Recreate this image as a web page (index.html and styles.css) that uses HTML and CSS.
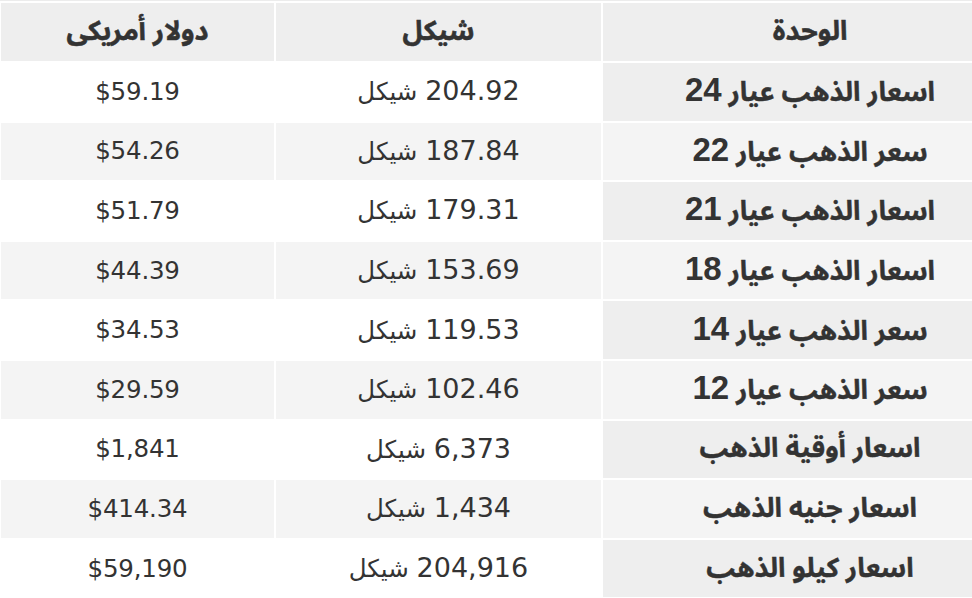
FILE: index.html
```html
<!DOCTYPE html>
<html lang="ar" dir="rtl">
<head>
<meta charset="utf-8">
<title>أسعار الذهب</title>
<link rel="stylesheet" href="styles.css">
</head>
<body>
<div class="topline"></div>
<table class="gold">
  <colgroup>
    <col class="c-unit">
    <col class="c-ils">
    <col class="c-usd">
  </colgroup>
  <thead>
    <tr><th>الوحدة</th><th>شيكل</th><th>دولار أمريكى</th></tr>
  </thead>
  <tbody>
    <tr><td>اسعار الذهب عيار <span class="num">24</span></td><td><span class="ils">204.92</span> شيكل</td><td>$59.19</td></tr>
    <tr><td>سعر الذهب عيار <span class="num">22</span></td><td><span class="ils">187.84</span> شيكل</td><td>$54.26</td></tr>
    <tr><td>اسعار الذهب عيار <span class="num">21</span></td><td><span class="ils">179.31</span> شيكل</td><td>$51.79</td></tr>
    <tr><td>اسعار الذهب عيار <span class="num">18</span></td><td><span class="ils">153.69</span> شيكل</td><td>$44.39</td></tr>
    <tr><td>سعر الذهب عيار <span class="num">14</span></td><td><span class="ils">119.53</span> شيكل</td><td>$34.53</td></tr>
    <tr><td>سعر الذهب عيار <span class="num">12</span></td><td><span class="ils">102.46</span> شيكل</td><td>$29.59</td></tr>
    <tr><td>اسعار أوقية الذهب</td><td><span class="ils">6,373</span> شيكل</td><td>$1,841</td></tr>
    <tr><td>اسعار جنيه الذهب</td><td><span class="ils">1,434</span> شيكل</td><td>$414.34</td></tr>
    <tr><td>اسعار كيلو الذهب</td><td><span class="ils">204,916</span> شيكل</td><td>$59,190</td></tr>
  </tbody>
</table>
</body>
</html>
```
FILE: styles.css
```css
html, body {
  margin: 0;
  padding: 0;
  background: #fff;
  overflow: hidden;
}
body {
  color: #333;
  font-family: "DejaVu Sans", sans-serif;
}
.topline {
  height: 1px;
  background: #ececec;
}
.gold {
  table-layout: fixed;
  border-collapse: separate;
  border-spacing: 2px;
  width: 1020px;
  margin-right: -47px;
  direction: rtl;
}
.c-unit { width: 414px; }
.c-ils { width: 325px; }
.c-usd { width: 273px; }
.gold th {
  height: 58px;
  padding: 0;
  background: #eeeeee;
  font-family: "Noto Sans Arabic", "DejaVu Sans", sans-serif;
  font-weight: bold;
  font-size: 27px;
  line-height: 30px;
  -webkit-text-stroke: 0.5px #333;
  text-align: center;
  vertical-align: middle;
}
.gold td {
  height: 57.6px;
  padding: 0;
  text-align: center;
  vertical-align: middle;
  font-size: 24.5px;
  line-height: 30px;
  letter-spacing: -0.2px;
  background: #fff;
}
.gold .ils {
  font-size: 27px;
  letter-spacing: 0.1px;
}
.gold tbody tr:nth-child(even) td {
  background: #f4f4f4;
}
.gold tbody td:first-child {
  background: #eeeeee;
  font-family: "Noto Sans Arabic", "DejaVu Sans", sans-serif;
  font-weight: bold;
  font-size: 27px;
  letter-spacing: 0;
  -webkit-text-stroke: 0.4px #333;
}
.gold .num {
  font-family: "Liberation Sans", sans-serif;
  font-size: 33px;
  letter-spacing: 1px;
  -webkit-text-stroke: 0;
}
```
